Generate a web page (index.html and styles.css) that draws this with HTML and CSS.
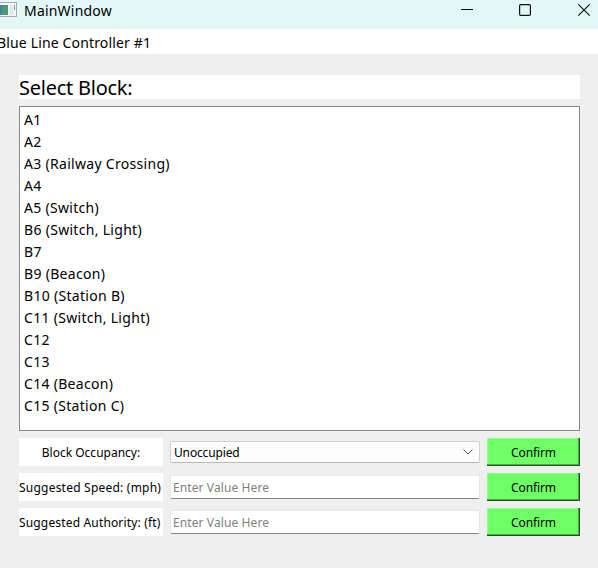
FILE: index.html
```html
<!DOCTYPE html>
<html lang="en">
<head>
<meta charset="utf-8">
<title>MainWindow</title>
<link rel="stylesheet" href="styles.css">
</head>
<body>
<div class="window">
  <header class="titlebar">
    <svg class="app-icon" width="17" height="15" viewBox="0 0 17 15">
      <rect x="-1" y=".5" width="17.5" height="14" fill="#f4f6f7" stroke="#a3a9ad"/>
      <rect x="0" y="3" width="8" height="10" fill="#477fa2"/>
      <rect x="2" y="4" width="6" height="9" fill="#4c9c72"/>
      <rect x="10" y="3" width="3" height="10" fill="#e3e6ea"/>
      <rect x="14" y="3" width="1" height="5" fill="#5aae9c"/>
    </svg>
    <span class="title">MainWindow</span>
    <svg class="controls" width="132" height="14" viewBox="0 0 132 14" fill="none" stroke="#111" stroke-width="1.2">
      <path d="M0 6.5h12" stroke-width="1"/>
      <rect x="58.6" y="1.6" width="10.8" height="10.8" rx="1.2"/>
      <path d="M117.3 1.3l11.4 11.4M128.7 1.3L117.3 12.7"/>
    </svg>
  </header>
  <div class="controller"><span>Blue Line Controller #1</span></div>
  <main class="content">
    <h1 class="heading">Select Block:</h1>
    <ul class="blocks">
      <li>A1</li>
      <li>A2</li>
      <li>A3 (Railway Crossing)</li>
      <li>A4</li>
      <li>A5 (Switch)</li>
      <li>B6 (Switch, Light)</li>
      <li>B7</li>
      <li>B9 (Beacon)</li>
      <li>B10 (Station B)</li>
      <li>C11 (Switch, Light)</li>
      <li>C12</li>
      <li>C13</li>
      <li>C14 (Beacon)</li>
      <li>C15 (Station C)</li>
    </ul>
    <div class="form">
      <div class="label occupancy">Block Occupancy:</div>
      <div class="combo"><span>Unoccupied</span>
        <svg width="10" height="6" viewBox="0 0 10 6" fill="none" stroke="#555"><path d="M.5.5L5 5 9.5.5"/></svg>
      </div>
      <button class="confirm">Confirm</button>
      <div class="label speed">Suggested Speed: (mph)</div>
      <input class="field" placeholder="Enter Value Here">
      <button class="confirm">Confirm</button>
      <div class="label authority">Suggested Authority: (ft)</div>
      <input class="field" placeholder="Enter Value Here">
      <button class="confirm">Confirm</button>
    </div>
  </main>
</div>
</body>
</html>
```
FILE: styles.css
```css
* { box-sizing: border-box; }
body {
  margin: 0;
  background: #efefef;
  color: #000;
  font-family: "Noto Sans", sans-serif;
  overflow: hidden;
}
.window { width: 598px; height: 568px; }
.titlebar {
  display: flex;
  height: 29px;
  background: #e3f8f6;
}
.app-icon { margin-top: 2px; }
.title {
  margin-left: 7px;
  font-size: 14px;
  line-height: 22px;
  letter-spacing: 0.2px;
}
.controls { margin: 3px 5px 0 auto; }
.controller {
  height: 25px;
  background: #fff;
  font-size: 14px;
  line-height: 27px;
  letter-spacing: 0.15px;
}
.controller span { margin-left: -3px; }
.content { padding: 21px 18px 0 19px; }
.heading {
  margin: 0 0 7px;
  height: 24px;
  background: #fff;
  font-size: 20px;
  font-weight: 400;
  line-height: 25px;
  letter-spacing: -0.25px;
}
.blocks {
  margin: 0 0 7px;
  padding: 2px 4px;
  height: 325px;
  border: 1px solid #828790;
  background: #fff;
  list-style: none;
  font-size: 14px;
  line-height: 22px;
  letter-spacing: 0.3px;
}
.form {
  display: grid;
  grid-template-columns: 144px 310px 93px;
  grid-auto-rows: 28px;
  gap: 7px;
  align-items: center;
  font-size: 12px;
}
.label {
  height: 28px;
  background: #fff;
  line-height: 29px;
  white-space: nowrap;
}
.occupancy { text-align: center; }
.speed { letter-spacing: 0.22px; }
.authority { letter-spacing: 0.16px; }
.combo {
  display: flex;
  align-items: center;
  justify-content: space-between;
  height: 22px;
  padding: 0 6px 0 3px;
  border: 1px solid #d0d0d0;
  border-bottom-color: #b8b8b8;
  border-radius: 2px;
  background: #fdfdfd;
  letter-spacing: -0.15px;
}
.field {
  height: 24px;
  padding: 1px 2px 0;
  border: 1px solid #e8e8e8;
  border-bottom-color: #868686;
  border-radius: 2px;
  outline: 0;
  background: #fff;
  font: inherit;
  letter-spacing: 0.1px;
}
.field::placeholder { color: #7f7f7f; opacity: 1; }
.confirm {
  height: 28px;
  padding: 1px 0 0;
  border: 0;
  background: #6eff66;
  box-shadow: inset -1px -1px #225022, inset -2px -2px #46a843, inset 1px 1px #8cff86;
  color: #000;
  font: inherit;
  letter-spacing: -0.1px;
}
```
